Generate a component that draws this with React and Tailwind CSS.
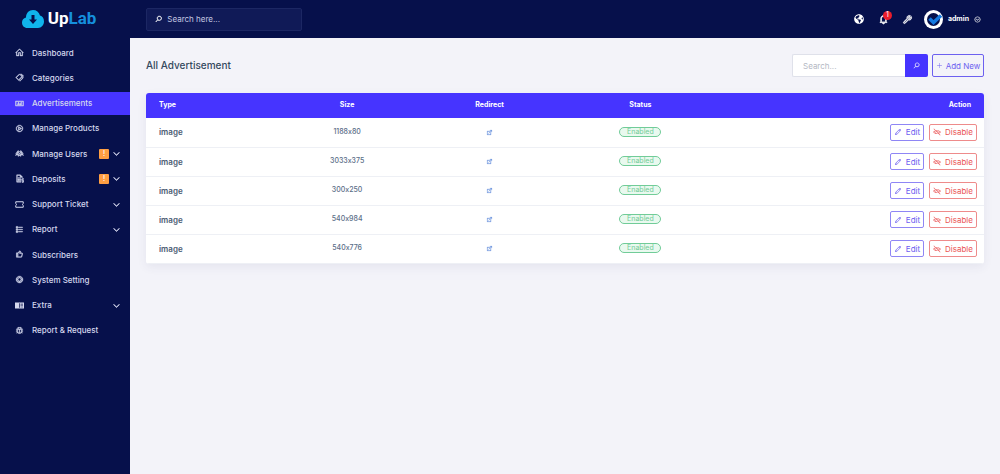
import React from "react";
import {
  LiaHomeSolid, LiaTagsSolid, LiaAdSolid, LiaPlayCircle, LiaUsersSolid, LiaFileInvoiceDollarSolid,
  LiaListSolid, LiaThumbsUp, LiaLifeRing, LiaBugSolid,
  LiaAngleDownSolid, LiaSearchSolid, LiaPlusSolid, LiaPenSolid, LiaEyeSlash, LiaExternalLinkAltSolid,
  LiaBell, LiaWrenchSolid, LiaChevronCircleDownSolid,
} from "react-icons/lia";
import { FaGlobeAmericas } from "react-icons/fa";

function TicketIcon({ className }) {
  return (
    <svg viewBox="0 0 18 18" className={className}>
      <path fill="none" stroke="currentColor" strokeWidth="2" d="M1.5 3.5h15v3.6a2 2 0 0 0 0 3.8v3.6h-15v-3.6a2 2 0 0 0 0-3.8z" />
    </svg>
  );
}

function ServerIcon({ className }) {
  return (
    <svg viewBox="0 0 18 18" className={className}>
      <path fill="currentColor" fillRule="evenodd" d="M0 3h18v12H0zM8 4.5v9h1.4v-9zM11 5.5v1.3h5V5.5zM11 8.4v1.3h5V8.4zM11 11.3v1.3h5v-1.3z" />
    </svg>
  );
}

const menu = [
  { label: "Dashboard", icon: LiaHomeSolid },
  { label: "Categories", icon: LiaTagsSolid },
  { label: "Advertisements", icon: LiaAdSolid, active: true },
  { label: "Manage Products", icon: LiaPlayCircle },
  { label: "Manage Users", icon: LiaUsersSolid, badge: true, sub: true },
  { label: "Deposits", icon: LiaFileInvoiceDollarSolid, badge: true, sub: true },
  { label: "Support Ticket", icon: TicketIcon, sub: true },
  { label: "Report", icon: LiaListSolid, sub: true },
  { label: "Subscribers", icon: LiaThumbsUp },
  { label: "System Setting", icon: LiaLifeRing },
  { label: "Extra", icon: ServerIcon, sub: true },
  { label: "Report & Request", icon: LiaBugSolid },
];

const sizes = ["1188x80", "3033x375", "300x250", "540x984", "540x776"];

function Logo() {
  return (
    <a href="#" className="flex items-center justify-center gap-1 h-[38px] pr-3 text-[17px] font-bold">
      <svg viewBox="0 0 44 36" className="w-[22px] h-[18px]">
        <path fill="#10b4ec" d="M11 36C4 36 0 31 0 25c0-5 3-9 8-10C8 6 14 0 22 0c7 0 12 4 14 11 5 1 8 6 8 12 0 7-5 13-12 13z" />
        <path fill="#06104b" d="M19 10h6v9h5l-8 9-8-9h5z" />
      </svg>
      <span className="font-[Roboto,sans-serif]">
        <span className="text-white">Up</span><span className="text-[#1590dd]">Lab</span>
      </span>
    </a>
  );
}

function Sidebar() {
  return (
    <aside className="w-[130px] shrink-0 bg-[#06104b]">
      <Logo />
      <nav className="flex flex-col justify-between h-[301px] mt-[3px]">
        {menu.map(({ label, icon: Icon, active, badge, sub }) => (
          <a
            key={label}
            href="#"
            className={`flex items-center h-[23px] px-[15px] pr-[10px] text-[8px] font-medium text-[#d5d8ee] ${active ? "bg-[#4634ff]" : ""}`}
          >
            <Icon className="size-[9px] mr-2 stroke-[1.5]" />
            <span className="flex-1 whitespace-nowrap">{label}</span>
            {badge && (
              <span className="flex items-center justify-center size-[10px] mr-1 rounded-[1px] bg-[#ff9f43] text-[7px] leading-[10px] text-white">!</span>
            )}
            {sub && <LiaAngleDownSolid className="size-[7px] stroke-[3]" />}
          </a>
        ))}
      </nav>
    </aside>
  );
}

function Topbar() {
  return (
    <header className="flex items-center justify-between h-[38px] pl-4 pr-[19px] bg-[#06104b]">
      <label className="flex items-center gap-[5px] w-[156px] h-[23px] px-2 rounded-[2px] border border-[#1c2763] bg-[#101a57]">
        <LiaSearchSolid className="size-[8px] text-white stroke-[2]" />
        <input
          aria-label="Search menu"
          placeholder="Search here..."
          className="w-full bg-transparent text-[8px] text-white placeholder:text-[#c5c9e2] outline-none"
        />
      </label>
      <div className="flex items-center text-white">
        <button aria-label="Visit site" className="mr-[14px]"><FaGlobeAmericas className="size-[10px]" /></button>
        <button aria-label="Notifications" className="relative mr-[13px]">
          <LiaBell className="size-[11px] stroke-[2]" />
          <span className="absolute -top-[3px] left-[5px] flex items-center justify-center size-[9px] rounded-full bg-[#ea1d2c] text-[7px] leading-[10px]">1</span>
        </button>
        <button aria-label="Tools" className="mr-[11px]"><LiaWrenchSolid className="size-[11px] stroke-[1.5]" /></button>
        <button className="flex items-center gap-[5px] text-[7px] font-bold">
          <svg viewBox="0 0 38 38" className="size-[19px]">
            <circle cx="19" cy="19" r="19" fill="#fff" />
            <circle cx="19" cy="19" r="13" fill="#06104b" />
            <path d="M11 17l8 8 15-14" fill="none" stroke="#1479e0" strokeWidth="7" />
          </svg>
          admin
          <LiaChevronCircleDownSolid className="size-[7px] stroke-[1]" />
        </button>
      </div>
    </header>
  );
}

function AdTable() {
  return (
    <div className="rounded-[3px] overflow-hidden bg-white shadow-[0_3px_10px_rgba(60,60,120,0.08)]">
      <table className="w-full table-fixed text-center text-[7px] text-[#5b6e88]">
        <thead className="bg-[#4634ff] text-white">
          <tr className="h-[25px]">
            <th className="w-[16%] pl-[13px] text-left font-bold">Type</th>
            <th className="w-[16%] font-bold">Size</th>
            <th className="w-[18%] font-bold">Redirect</th>
            <th className="w-[18%] font-bold">Status</th>
            <th className="pr-[13px] text-right font-bold">Action</th>
          </tr>
        </thead>
        <tbody>
          {sizes.map(size => (
            <tr key={size} className="h-[29px] border-b border-[#eef0f5]">
              <td className="pl-[13px] text-left text-[8px] font-semibold text-[#4a5b72]">image</td>
              <td className="font-medium [font-feature-settings:'calt'_0]">{size}</td>
              <td>
                <a href="#" aria-label="Open redirect" className="inline-block align-middle text-[#6d94e0]">
                  <LiaExternalLinkAltSolid className="size-[7px] stroke-[1]" />
                </a>
              </td>
              <td>
                <span className="inline-flex items-center justify-center w-[42px] h-[10px] align-middle rounded-full border border-[#71cc98] bg-[#e9f9ef] text-[7px] leading-[10px] text-[#71cc98]">
                  Enabled
                </span>
              </td>
              <td className="pr-[7px]">
                <div className="flex justify-end gap-[5px] text-[8px]">
                  <button className="flex items-center justify-center gap-1 w-[34px] h-[17px] rounded-[2px] border border-[#8f86f5] text-[#6c60f0]">
                    <LiaPenSolid className="size-[8px]" />
                    Edit
                  </button>
                  <button className="flex items-center justify-center gap-1 w-[48px] h-[17px] rounded-[2px] border border-[#ee8b8b] text-[#ea5455]">
                    <LiaEyeSlash className="size-[8px]" />
                    Disable
                  </button>
                </div>
              </td>
            </tr>
          ))}
        </tbody>
      </table>
    </div>
  );
}

export default function App() {
  return (
    <div className="flex min-h-screen bg-[#f3f3f9] font-[Inter,sans-serif]">
      <Sidebar />
      <div className="flex-1 min-w-0">
        <Topbar />
        <main className="px-4 pt-4">
          <div className="flex items-center justify-between mb-4">
            <h1 className="text-[10px] font-medium text-[#34495e]">All Advertisement</h1>
            <div className="flex gap-1">
              <form className="flex h-[23px]">
                <input
                  aria-label="Search advertisements"
                  placeholder="Search..."
                  className="w-[113px] px-[10px] rounded-l-[2px] border border-r-0 border-[#dfe1ea] bg-white text-[8px] placeholder:text-[#b4b8c4] outline-none"
                />
                <button type="button" aria-label="Search" className="flex items-center justify-center w-[23px] rounded-r-[2px] bg-[#4634ff] text-white">
                  <LiaSearchSolid className="size-[7px] stroke-[1]" />
                </button>
              </form>
              <button className="flex items-center justify-center gap-[3px] w-[52px] h-[23px] rounded-[2px] border border-[#6c60f0] text-[8px] text-[#6c60f0]">
                <LiaPlusSolid className="size-[7px]" />
                Add New
              </button>
            </div>
          </div>
          <AdTable />
        </main>
      </div>
    </div>
  );
}
